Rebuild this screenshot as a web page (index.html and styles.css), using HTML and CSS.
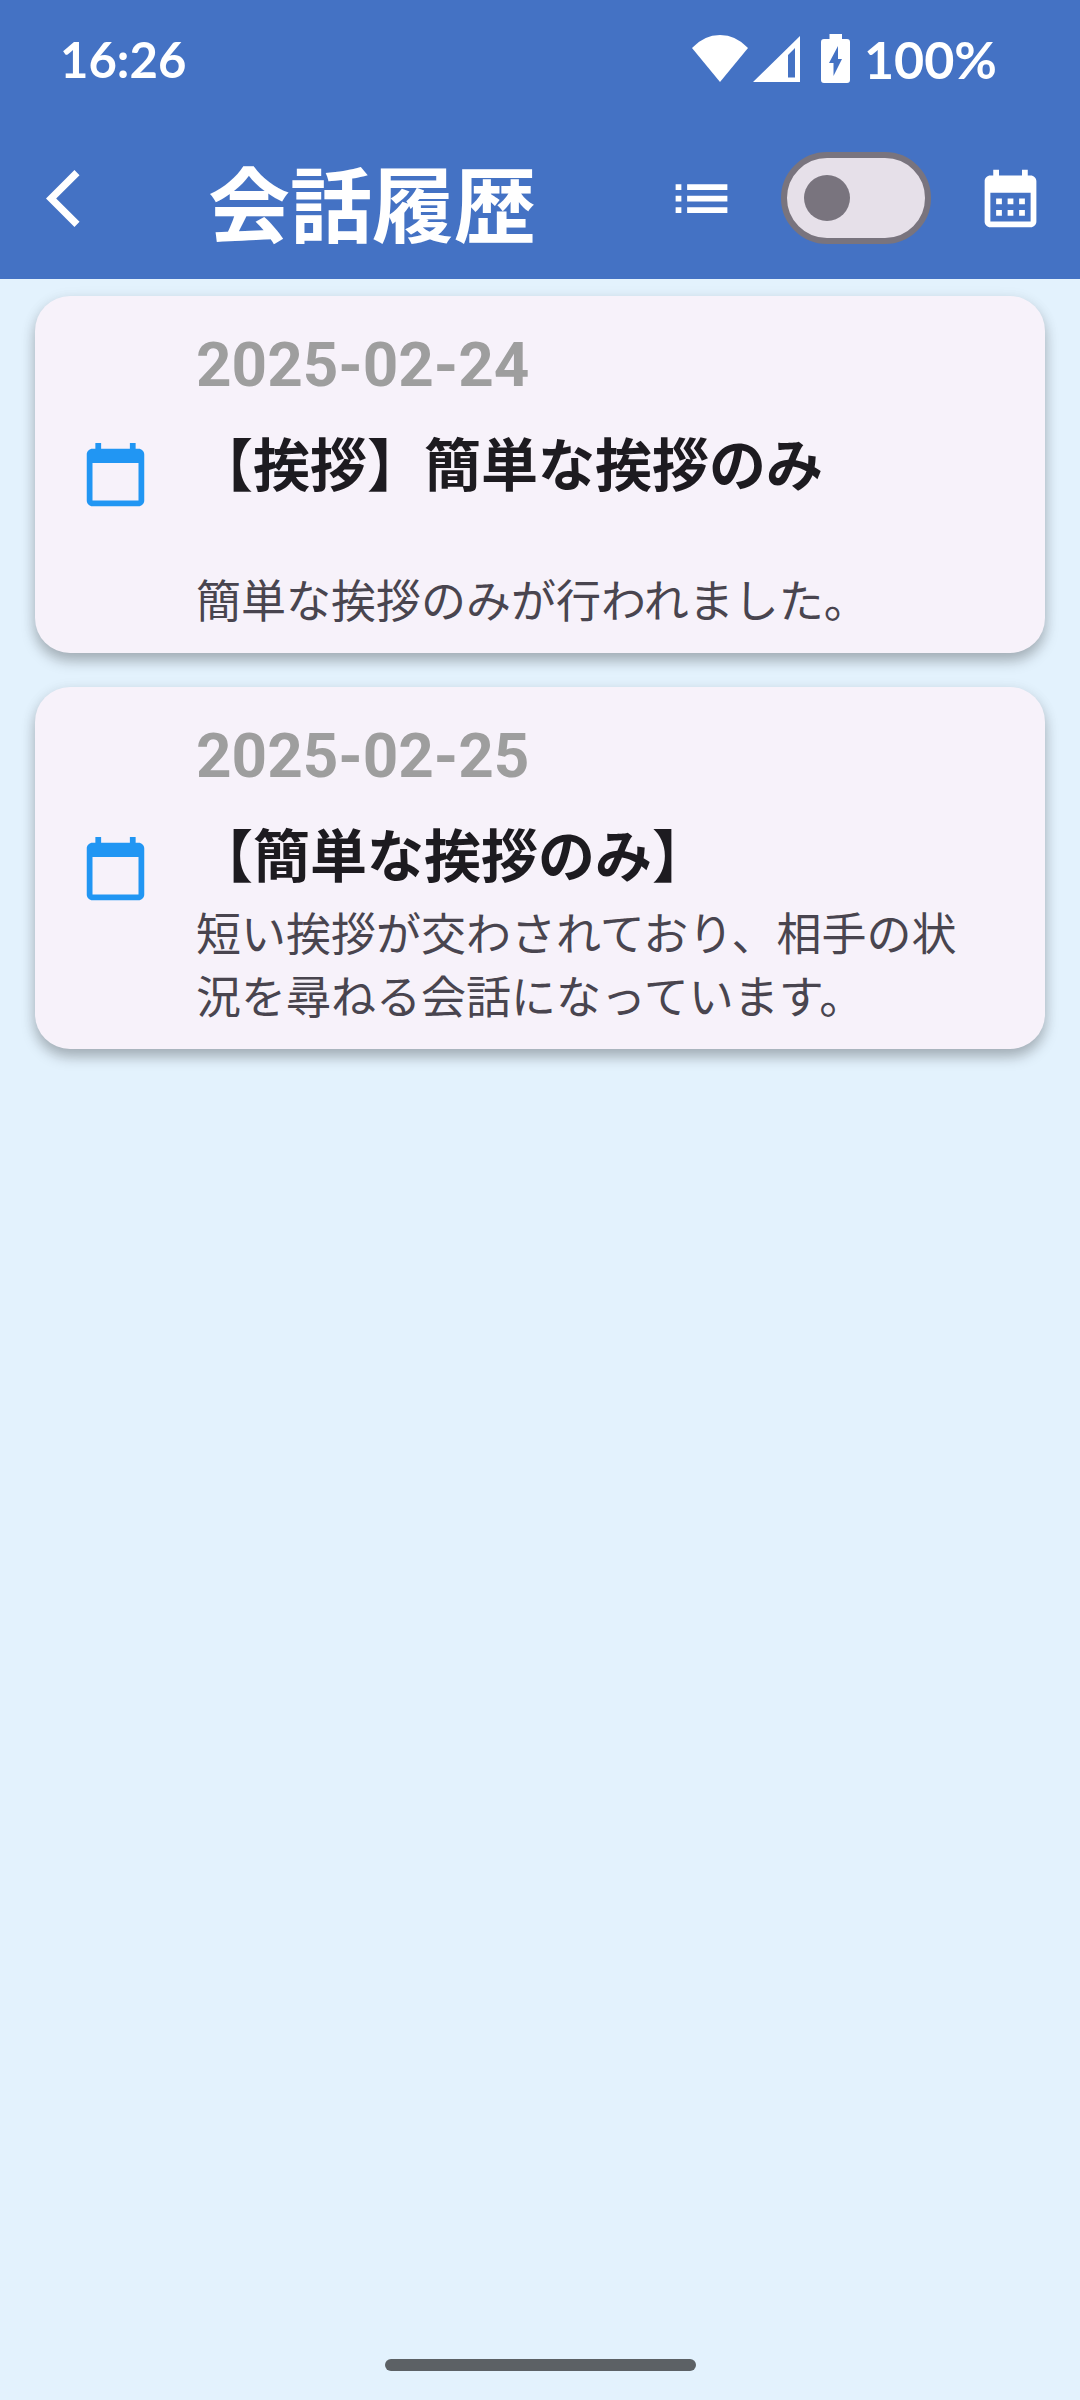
FILE: index.html
```html
<!DOCTYPE html>
<html lang="ja">
<head>
<meta charset="utf-8">
<meta name="viewport" content="width=device-width, initial-scale=1">
<title>会話履歴</title>
<link rel="stylesheet" href="styles.css">
</head>
<body>
<svg class="sprite" aria-hidden="true">
  <symbol id="calendar" viewBox="0 0 24 24"><path d="M20 3h-1V1h-2v2H7V1H5v2H4c-1.1 0-2 .9-2 2v16c0 1.1.9 2 2 2h16c1.1 0 2-.9 2-2V5c0-1.1-.9-2-2-2zm0 18H4V8h16v13z"/></symbol>
</svg>
<header class="header">
  <div class="status">
    <span class="clock">16:26</span>
    <div class="indicators">
      <svg class="wifi" viewBox="0 0 56 47" aria-hidden="true"><path d="M0 13Q12 0 28 0T56 13L28 47Z"/></svg>
      <svg class="signal" viewBox="0 0 47 46" aria-hidden="true"><path fill-rule="evenodd" d="M47 0V46H0ZM42 12L35 19V41.500H42Z"/></svg>
      <svg class="battery" viewBox="0 0 29 49" aria-hidden="true"><path fill-rule="evenodd" d="M8.500 0H21V5H26Q29 5 29 8V46Q29 49 26 49H3Q0 49 0 46V8Q0 5 3 5H8.500ZM17 12L8 29H12.500V42L21 25H17Z"/></svg>
      <span class="level">100%</span>
    </div>
  </div>
  <div class="appbar">
    <button class="icon-button back" type="button" aria-label="戻る">
      <svg class="icon" viewBox="0 0 24 24"><path d="M11.670 3.870L9.900 2.100 0 12l9.900 9.900 1.770-1.770L3.540 12z"/></svg>
    </button>
    <h1 class="title">会話履歴</h1>
    <div class="actions">
      <svg class="icon" viewBox="0 0 24 24" aria-hidden="true"><path d="M3 13h2v-2H3v2zm0 4h2v-2H3v2zm0-8h2V7H3v2zm4 4h14v-2H7v2zm0 4h14v-2H7v2zM7 7v2h14V7H7z"/></svg>
      <input class="switch" type="checkbox" role="switch" aria-label="カレンダー表示">
      <svg class="icon" viewBox="0 0 24 24" aria-hidden="true"><path d="M19 4h-1V2h-2v2H8V2H6v2H5c-1.110 0-1.990.9-1.990 2L3 20c0 1.100.890 2 2 2h14c1.100 0 2-.9 2-2V6c0-1.100-.9-2-2-2zm0 16H5V10h14v10zM9 14H7v-2h2v2zm4 0h-2v-2h2v2zm4 0h-2v-2h2v2zm-8 4H7v-2h2v2zm4 0h-2v-2h2v2zm4 0h-2v-2h2v2z"/></svg>
    </div>
  </div>
</header>
<main class="history">
  <article class="card">
    <svg class="icon card-icon" aria-hidden="true"><use href="#calendar"/></svg>
    <div class="card-text">
      <time class="date" datetime="2025-02-24">2025-02-24</time>
      <h2 class="topic topic-spaced">【挨拶】簡単な挨拶のみ</h2>
      <p class="summary">簡単な挨拶のみが行われました。</p>
    </div>
  </article>
  <article class="card">
    <svg class="icon card-icon" aria-hidden="true"><use href="#calendar"/></svg>
    <div class="card-text">
      <time class="date" datetime="2025-02-25">2025-02-25</time>
      <h2 class="topic">【簡単な挨拶のみ】</h2>
      <p class="summary">短い挨拶が交わされており、相手の状況を尋ねる会話になっています。</p>
    </div>
  </article>
</main>
<footer class="gesture"><div class="gesture-bar"></div></footer>
</body>
</html>
```

FILE: styles.css
```css
* { box-sizing: border-box; }

body {
  margin: 0;
  min-height: 100vh;
  display: flex;
  flex-direction: column;
  background: #e3f2fd;
  font-family: Roboto, "Noto Sans CJK JP", sans-serif;
}

h1, h2, p { margin: 0; }

.sprite { display: none; }

.header {
  background: #4472c4;
  color: #fff;
}

.status {
  display: flex;
  align-items: center;
  justify-content: space-between;
  height: 117px;
  padding: 0 83px 0 60px;
  font-family: Lato, sans-serif;
  font-size: 52px;
  font-weight: 700;
  line-height: 62px;
}

.clock { font-size: 49px; }

.indicators {
  display: flex;
  align-items: center;
  fill: #fff;
}

.wifi { width: 56px; height: 47px; margin-right: 5px; }
.signal { width: 47px; height: 46px; margin-right: 21px; }
.battery { width: 29px; height: 49px; margin-right: 14px; }

.appbar {
  display: flex;
  align-items: center;
  height: 162px;
  padding: 0 35px 0 46px;
}

.icon {
  display: block;
  flex: none;
  width: 69px;
  height: 69px;
  fill: currentColor;
}

.icon-button {
  padding: 0;
  border: 0;
  background: none;
  color: inherit;
}

.back { margin-right: 93px; }

.title {
  flex: 1;
  padding-top: 20px;
  font-size: 82px;
  font-weight: 700;
  line-height: 120px;
}

.actions {
  display: flex;
  align-items: center;
  gap: 45px;
}

.switch {
  appearance: none;
  display: flex;
  align-items: center;
  width: 150px;
  height: 92px;
  margin: 0;
  padding: 0 17px;
  border: 6px solid #79747e;
  border-radius: 46px;
  background: #e6e0e9;
}

.switch::before {
  content: "";
  width: 46px;
  height: 46px;
  border-radius: 50%;
  background: #79747e;
}

.switch:checked { justify-content: flex-end; }

.history {
  flex: 1;
  display: flex;
  flex-direction: column;
  gap: 34px;
  padding: 17px 35px;
}

.card {
  display: flex;
  align-items: center;
  gap: 46px;
  padding: 34px 69px 19px 46px;
  border-radius: 35px;
  background: #f7f2fa;
  box-shadow: 0 8px 14px rgba(0, 0, 0, 0.26), 0 2px 16px rgba(0, 0, 0, 0.06);
}

/* The icon is centred on the whole card, so it offsets the uneven padding. */
.card-icon {
  color: #2196f3;
  margin-bottom: 15px;
}

.card-text { flex: 1; }

.date {
  display: block;
  color: #9e9e9e;
  font-size: 62px;
  font-weight: 700;
  line-height: 70px;
}

.topic {
  margin-top: 25px;
  color: #1d1b20;
  font-size: 57px;
  font-weight: 700;
  line-height: 84px;
}

.topic-spaced { margin-bottom: 62px; }

.summary {
  margin-top: 4px;
  color: #49454f;
  font-size: 45px;
  line-height: 63px;
}

.gesture {
  display: flex;
  justify-content: center;
  padding-bottom: 29px;
}

.gesture-bar {
  width: 311px;
  height: 12px;
  border-radius: 6px;
  background: #5c6165;
}
```
